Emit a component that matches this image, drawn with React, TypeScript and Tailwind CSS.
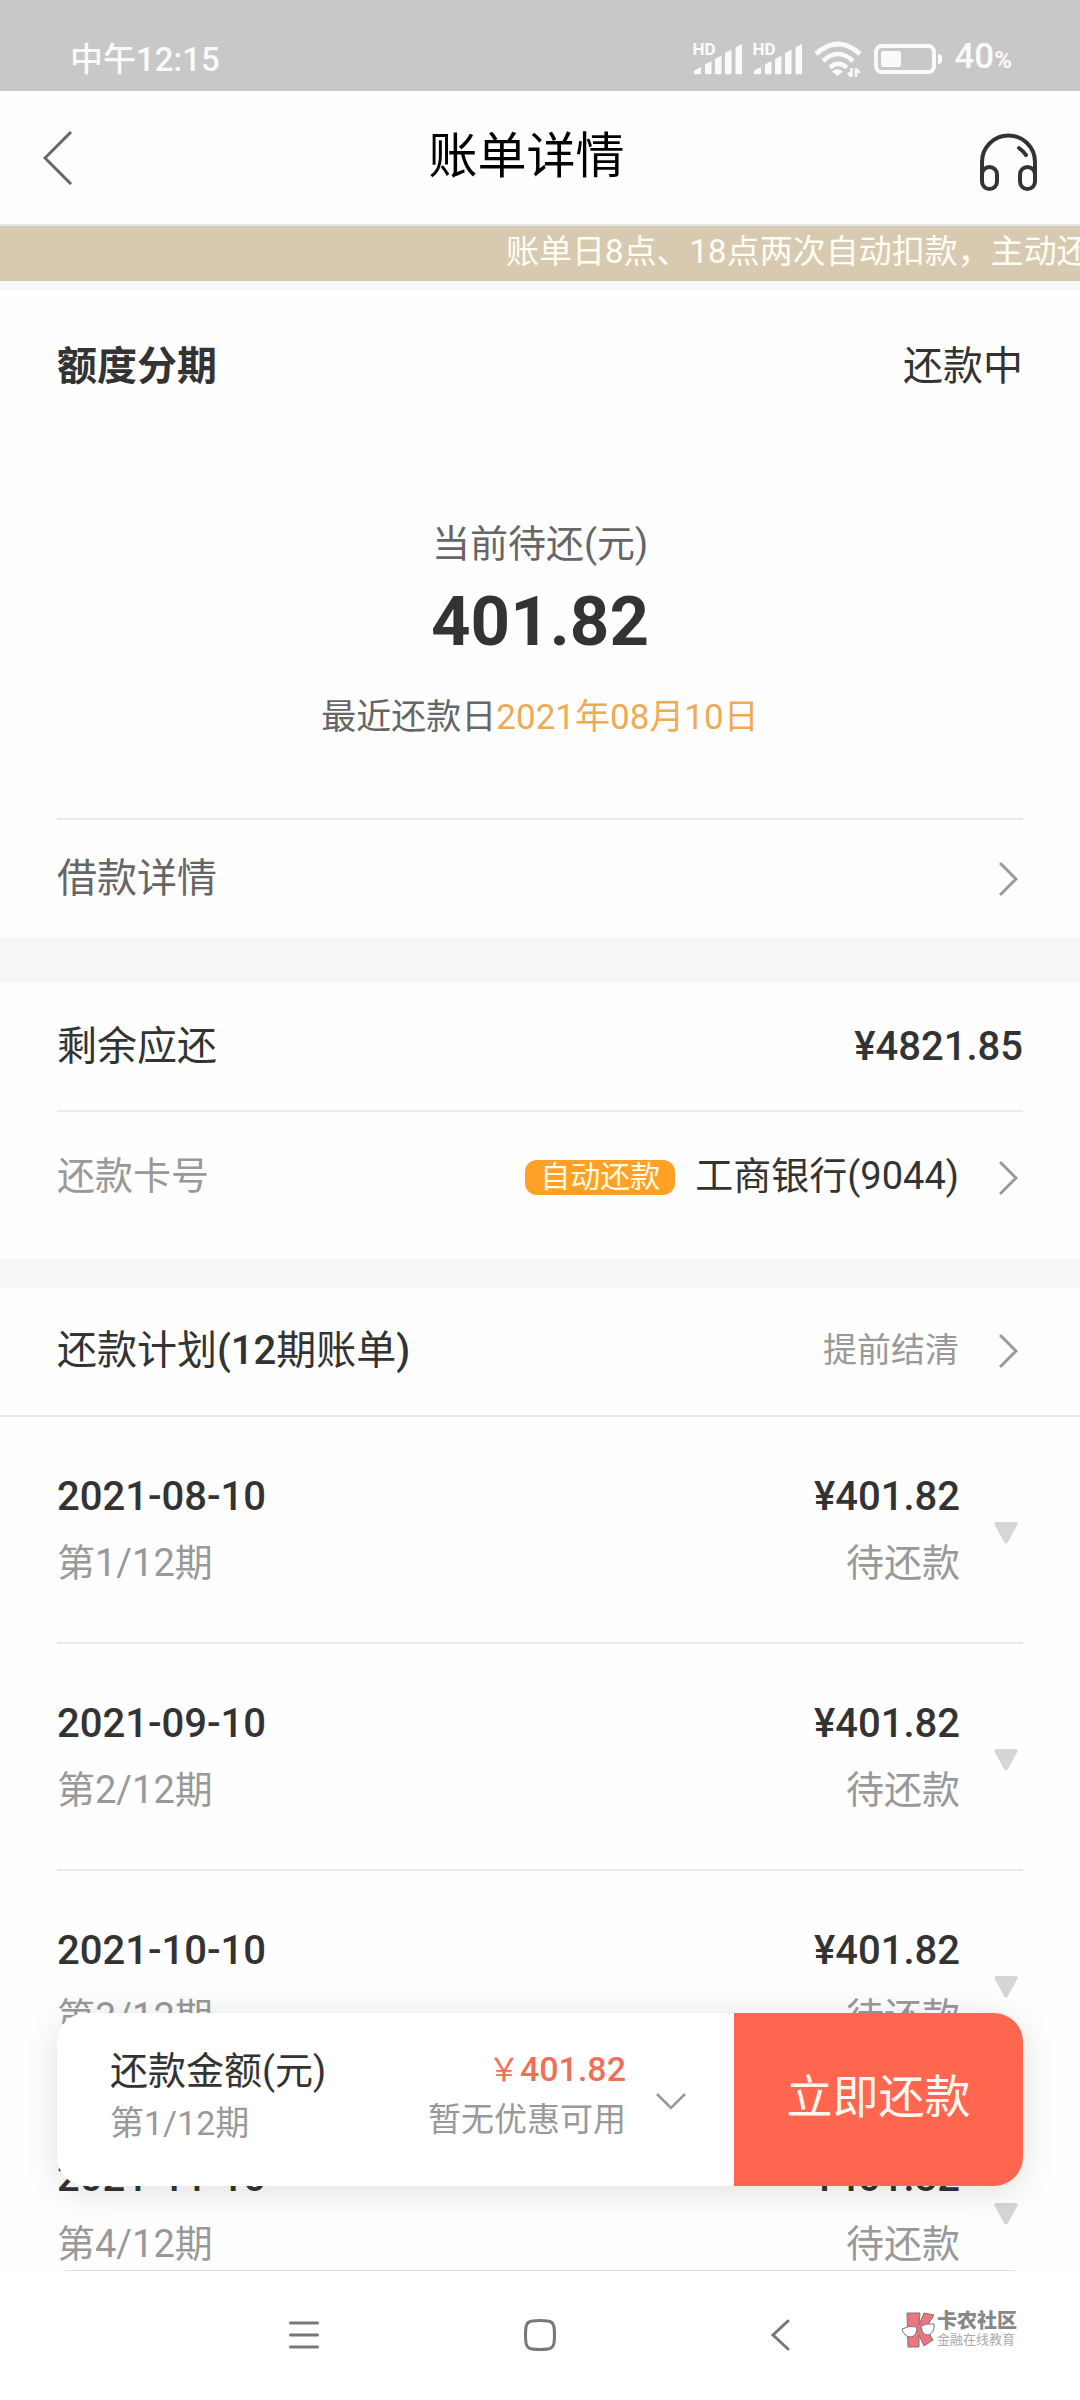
import React from "react";

const bills = [
  { date: "2021-08-10", period: "第1/12期", amount: "¥401.82", status: "待还款" },
  { date: "2021-09-10", period: "第2/12期", amount: "¥401.82", status: "待还款" },
  { date: "2021-10-10", period: "第3/12期", amount: "¥401.82", status: "待还款" },
  { date: "2021-11-10", period: "第4/12期", amount: "¥401.82", status: "待还款" },
];

const Signal: React.FC = () => (
  <div className="relative h-8 w-[50px]">
    <span className="absolute left-0 top-0 text-[17px] leading-[13px] font-bold">HD</span>
    <svg viewBox="0 0 50 32" className="h-8 w-[50px]" fill="currentColor">
      <path d="M2 27.500l7-3.500v6.500q0 .8-.8.8H3q-1 0-1-1z" />
      <path d="M13 21.500l6.500-3.500v12.500q0 .8-.8.8h-4.700q-1 0-1-1z" />
      <path d="M23 16l6.500-3.500v18q0 .8-.8.8h-4.700q-1 0-1-1z" />
      <path d="M33 10l6.500-3.500v24q0 .8-.8.8h-4.700q-1 0-1-1z" />
      <path d="M43.500 4.500l6.500-3.500v29.500q0 .8-.8.8h-4.700q-1 0-1-1z" />
    </svg>
  </div>
);

const ChevronRight: React.FC = () => (
  <svg viewBox="0 0 24 36" className="h-9 w-6" fill="none" stroke="#999" strokeWidth="3">
    <path d="M1 2l16 16L1 34" />
  </svg>
);

const StatusBar: React.FC = () => (
  <div className="flex h-[91px] items-end justify-between bg-[#c8c8c8] pb-3 pl-[70px] pr-[68px] text-[#fafafa]">
    <span className="text-[33px] leading-[38px] font-medium">中午12:15</span>
    <div className="flex items-center gap-[10px]">
      <Signal />
      <Signal />
      <svg viewBox="0 0 48 36" className="ml-[2px] h-9 w-12" fill="none" stroke="currentColor" strokeWidth="5">
        <path d="M2 13Q24-7 46 13" />
        <path d="M9 20Q24 6 39 20" strokeWidth="4.500" />
        <path d="M16 26.500Q24 19 33 26.500" strokeWidth="4.500" />
        <path d="M18 30.500q5.500-4.500 11 0L23.500 35z" fill="currentColor" stroke="none" />
        <path d="M37.500 27v9M34 31.500l3 4M42 36.500v-9M45.500 32l-3-4" strokeWidth="2.500" />
      </svg>
      <svg viewBox="0 0 70 32" className="ml-[2px] h-8 w-[70px]" fill="currentColor">
        <rect x="2" y="3" width="58" height="26" rx="6" fill="none" stroke="currentColor" strokeWidth="4" />
        <rect x="7" y="8" width="20" height="16" rx="2.500" />
        <path d="M64 11q4 0 4 3v4q0 3-4 3z" />
      </svg>
      <span className="flex items-baseline text-[35px] leading-[38px] font-medium">
        40<span className="text-[24px] font-bold">%</span>
      </span>
    </div>
  </div>
);

const BillRow: React.FC<{ bill: (typeof bills)[number] }> = ({ bill }) => (
  <li className="mx-[57px] flex h-[227px] border-b-2 border-[#e9e9e9]">
    <div className="flex-1 pt-[56px]">
      <p className="text-[40px] leading-[48px] font-medium">{bill.date}</p>
      <p className="mt-[18px] text-[38px] leading-[48px] text-[#999]">{bill.period}</p>
    </div>
    <div className="pt-[56px] text-right">
      <p className="text-[40px] leading-[48px] font-medium">{bill.amount}</p>
      <p className="mt-[18px] text-[38px] leading-[48px] text-[#999]">{bill.status}</p>
    </div>
    <button type="button" aria-label="展开" className="ml-[34px] mr-[5px] mt-[104px] h-6 w-6">
      <svg viewBox="0 0 24 24" className="h-6 w-6" fill="#d6d6d6">
        <path d="M2.500 1h19q3 0 1.800 3L14 21q-2 3-4 0L.7 4Q-.5 1 2.500 1z" />
      </svg>
    </button>
  </li>
);

const PayBar: React.FC = () => (
  <div className="absolute inset-x-[57px] bottom-[85px] flex h-[173px] overflow-hidden rounded-[29px] bg-white shadow-[0_6px_36px_rgba(0,0,0,0.12)]">
    <div className="flex flex-1 items-start justify-between pl-[53px] pr-[48px]">
      <div className="pt-[34px]">
        <p className="text-[38px] leading-[48px]">还款金额(元)</p>
        <p className="mt-1 text-[34px] leading-[48px] text-[#999]">第1/12期</p>
      </div>
      <div className="flex items-center gap-[30px] pt-[32px]">
        <div className="text-right">
          <p className="text-[34px] leading-[48px] font-medium text-[#ee7058]">
            <span className="text-[32px] font-normal">￥</span>401.82
          </p>
          <p className="mt-1 text-[33px] leading-[44px] text-[#999]">暂无优惠可用</p>
        </div>
        <svg viewBox="0 0 30 18" className="mt-4 h-[18px] w-[30px]" fill="none" stroke="#999" strokeWidth="2.500">
          <path d="M1 1l14 14L29 1" />
        </svg>
      </div>
    </div>
    <button type="button" className="w-[289px] bg-[#ff664f] pb-1 text-[46px] text-[#fff8f0]">
      立即还款
    </button>
  </div>
);

const NavBar: React.FC = () => (
  <footer className="relative flex h-[129px] items-center justify-center bg-white pb-[2px] pl-[2px] text-[#777]">
    <div className="flex items-center gap-[205px]">
      <button type="button" aria-label="菜单">
        <svg viewBox="0 0 30 32" className="h-8 w-[30px]" fill="none" stroke="currentColor" strokeWidth="3" strokeLinecap="round">
          <path d="M1.500 4h27M1.500 16h27M1.500 28h27" />
        </svg>
      </button>
      <button type="button" aria-label="主页">
        <svg viewBox="0 0 32 32" className="h-8 w-8" fill="none" stroke="currentColor" strokeWidth="3">
          <path d="M8 2Q16 1 24 2q5 .5 6 6 1 8 0 16-1 5.500-6 6-8 1-16 0-5-.5-6-6-1-8 0-16 1-5.500 6-6z" />
        </svg>
      </button>
      <button type="button" aria-label="返回">
        <svg viewBox="0 0 32 32" className="h-8 w-8" fill="none" stroke="currentColor" strokeWidth="3" strokeLinecap="round">
          <path d="M27 2L12 16l15 14" />
        </svg>
      </button>
    </div>
    <div className="absolute right-[63px] top-[40px] flex items-center gap-[2px]">
      <svg viewBox="0 0 34 36" className="h-9 w-[34px]" stroke="#777" strokeWidth="1">
        <path d="M6 1h13l-1 12 5-12 10 2-8 13 7 12-9 6-5-11v12H7z" fill="#ee7480" />
        <path d="M1 17q7-4 15-2 0 9-6 10-7 0-9-8z" fill="#fff" />
        <path d="M20 14q6-3 13-2 1 9-6 11-6 0-7-9z" fill="#fff" />
      </svg>
      <div>
        <p className="text-[20px] leading-[21px] font-black text-[#888]">卡农社区</p>
        <p className="text-[13px] leading-[16px] text-[#aaa]">金融在线教育</p>
      </div>
    </div>
  </footer>
);

const App: React.FC = () => {
  return (
    <div className="flex h-screen flex-col overflow-hidden bg-[#fefefe] font-['Roboto','Noto_Sans_CJK_SC',sans-serif] text-[#333]">
      <StatusBar />

      <header className="flex h-[135px] items-center justify-between border-b-2 border-[#e6e6e6] px-[43px]">
        <button type="button" aria-label="返回">
          <svg viewBox="0 0 30 54" className="h-[54px] w-[30px]" fill="none" stroke="#666" strokeWidth="3">
            <path d="M28 1L2 27l26 26" />
          </svg>
        </button>
        <h1 className="pb-[2px] text-[49px] leading-[60px] text-black">账单详情</h1>
        <button type="button" aria-label="客服">
          <svg viewBox="0 0 57 58" className="mt-2 h-[58px] w-[57px]" fill="none" stroke="#333" strokeWidth="4" strokeLinecap="round">
            <path d="M2 45V29a26.500 26.500 0 0 1 53 0v16" />
            <rect x="2" y="34" width="15" height="22" rx="7.500" />
            <rect x="40" y="34" width="15" height="22" rx="7.500" />
            <path d="M39 15q4 3 7 7" />
          </svg>
        </button>
      </header>

      <div className="relative flex min-h-0 flex-1 flex-col">
        <main className="flex-1 overflow-y-auto [scrollbar-width:none]">
          <p className="overflow-hidden bg-[#d8cab0] pb-[4px] pl-[506px] text-[33px] leading-[51px] whitespace-nowrap text-[#fffdf5]">
            账单日8点、18点两次自动扣款，主动还
          </p>

          {/* Current bill */}
          <section className="border-t-9 border-[#f7f7f8] px-[57px]">
            <div className="flex justify-between pt-[53px] text-[40px] leading-[48px]">
              <h2 className="font-bold">额度分期</h2>
              <span>还款中</span>
            </div>
            <div className="pt-[129px] text-center text-[#666]">
              <p className="text-[38px] leading-[48px]">当前待还(元)</p>
              <p className="mt-[14px] text-[69px] leading-[80px] font-bold text-[#333]">401.82</p>
              <p className="mt-[32px] text-[35px] leading-[48px]">
                最近还款日<span className="text-[#eeaa55]">2021年08月10日</span>
              </p>
            </div>
            <a href="#loan" className="mt-[76px] flex h-[119px] items-center justify-between border-t-2 border-[#e9e9e9] text-[40px] text-[#666]">
              借款详情
              <ChevronRight />
            </a>
          </section>

          {/* Remaining amount and card */}
          <section className="border-t-46 border-[#f6f7f9] px-[57px]">
            <div className="flex h-[129px] items-center justify-between border-b-2 border-[#e9e9e9] text-[40px]">
              <span>剩余应还</span>
              <span className="font-medium">¥4821.85</span>
            </div>
            <a href="#card" className="flex h-[147px] items-center pb-[16px] text-[38px]">
              <span className="flex-1 pb-[2px] text-[#999]">还款卡号</span>
              <span className="mr-[20px] h-[35px] rounded-[12px] bg-[#ffa127] px-[15px] text-[30px] leading-[33px] text-[#fffbe0]">自动还款</span>
              <span className="mr-[40px] pb-[2px]">工商银行(9044)</span>
              <ChevronRight />
            </a>
          </section>

          {/* Repayment plan */}
          <section className="border-t-29 border-[#f6f7f9]">
            <div className="flex h-[129px] items-center border-b-2 border-[#e9e9e9] px-[57px] pb-[2px]">
              <h2 className="flex-1 text-[40px]">
                还款计划<span className="font-medium">(12</span>期账单<span className="font-medium">)</span>
              </h2>
              <a href="#settle" className="flex items-center gap-[40px] text-[34px] text-[#999]">
                提前结清
                <ChevronRight />
              </a>
            </div>
            <ul>
              {bills.map((bill) => (
                <BillRow key={bill.date} bill={bill} />
              ))}
            </ul>
          </section>
        </main>
        <hr className="mx-[66px] border-t border-[#dedede]" />
        <PayBar />
      </div>

      <NavBar />
    </div>
  );
};

export default App;
